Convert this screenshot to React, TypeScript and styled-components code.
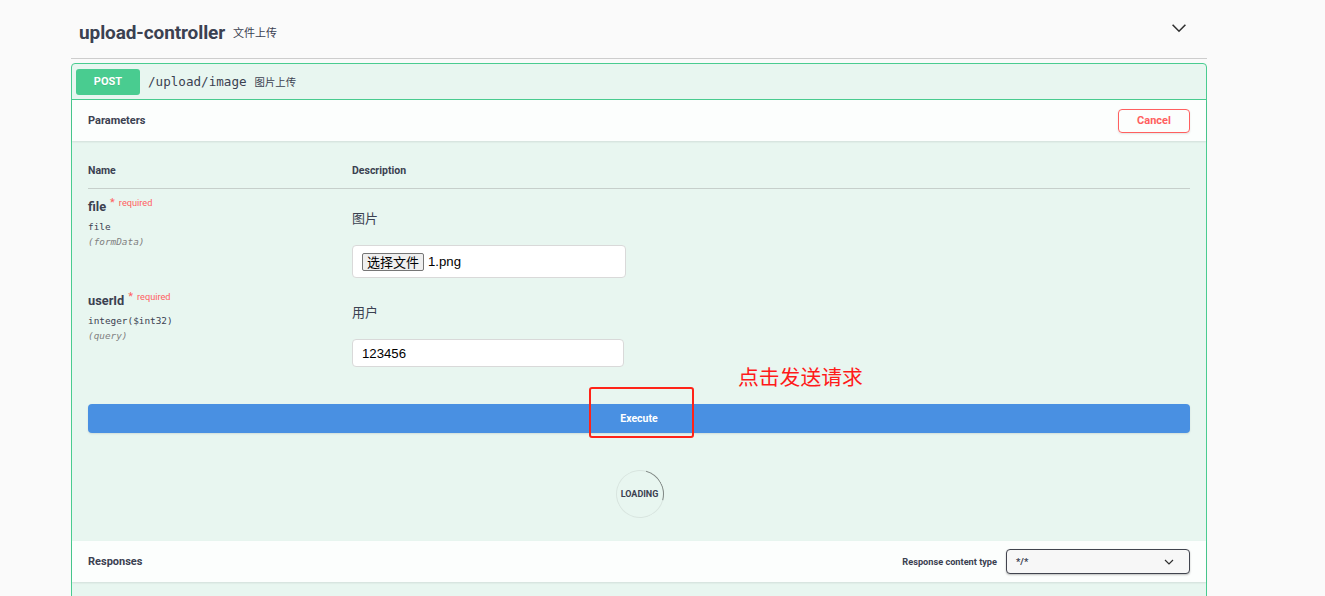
import React from "react";
import styled, { createGlobalStyle } from "styled-components";

const GlobalStyle = createGlobalStyle`
  html, body { margin: 0; padding: 0; background: #fafafa; }
  body { font-family: Roboto, "Noto Sans CJK SC", sans-serif; color: #3b4151; }
  * { box-sizing: border-box; }
`;

const UI = `Roboto, "Noto Sans CJK SC", sans-serif`;
const MONO = `"DejaVu Sans Mono", "Noto Sans CJK SC", monospace`;
const CJK = `"Noto Sans CJK SC", sans-serif`;

const Page = styled.div`
  position: relative;
  width: 1325px;
  height: 596px;
  overflow: hidden;
`;

const Wrapper = styled.div`
  margin-left: 71px;
  width: 1136px;
`;

const TagHeader = styled.div`
  height: 59px;
  display: flex;
  align-items: center;
  padding: 6px 20px 0 8px;
  border-bottom: 1px solid #cdcdcd;
`;

const TagTitle = styled.span`
  font-family: ${UI};
  font-weight: 700;
  font-size: 19px;
  color: #3b4151;
  letter-spacing: -0.1px;
`;

const TagSmall = styled.span`
  font-family: ${CJK};
  font-size: 11px;
  color: #3b4151;
  margin-left: 8px;
  flex: 1;
`;

const ChevronSlot = styled.span`
  display: flex;
  margin-bottom: 8px;
`;

const Opblock = styled.div`
  margin-top: 4px;
  border: 1px solid #49cc90;
  border-radius: 4px;
  background: #e8f6f0;
  height: 600px;
`;

const Summary = styled.div`
  height: 36px;
  display: flex;
  align-items: center;
  padding: 0 4px;
  border-bottom: 1px solid #49cc90;
`;

const Method = styled.span`
  width: 64px;
  height: 26px;
  border-radius: 3px;
  background: #49cc90;
  color: #fff;
  font-family: ${UI};
  font-weight: 700;
  font-size: 11px;
  display: flex;
  align-items: center;
  justify-content: center;
  text-shadow: 0 1px 0 rgba(0, 0, 0, 0.1);
`;

const Path = styled.span`
  font-family: ${MONO};
  font-size: 12.6px;
  color: #3b4151;
  margin-left: 8px;
`;

const PathDesc = styled.span`
  font-family: ${CJK};
  font-size: 10.4px;
  color: #3b4151;
  margin-left: 8px;
`;

const SectionHeader = styled.div`
  height: 41px;
  display: flex;
  align-items: center;
  justify-content: space-between;
  padding: 0 16px 0 16px;
  background: rgba(255, 255, 255, 0.85);
  box-shadow: 0 1px 2px rgba(0, 0, 0, 0.1);
`;

const SectionTitle = styled.h4`
  margin: 0;
  font-family: ${UI};
  font-weight: 700;
  font-size: 11px;
  color: #3b4151;
`;

const CancelButton = styled.button`
  width: 72px;
  height: 24px;
  border: 1.5px solid #ff6060;
  border-radius: 4px;
  background: transparent;
  color: #ff6060;
  font-family: ${UI};
  font-weight: 700;
  font-size: 11px;
  box-shadow: 0 1px 2px rgba(0, 0, 0, 0.1);
  padding: 0;
`;

const Body = styled.div`
  padding: 20px 16px 0 16px;
  height: 400px;
  display: flex;
  flex-direction: column;
`;

const TableHead = styled.div`
  display: grid;
  grid-template-columns: 264px 1fr;
  height: 28px;
  align-items: start;
  border-bottom: 1px solid #c6cfcb;
  font-family: ${UI};
  font-weight: 700;
  font-size: 10.5px;
  line-height: 12px;
  color: #3b4151;
  padding-top: 4px;
`;

const Row = styled.div`
  display: grid;
  grid-template-columns: 264px 1fr;
  padding: 10px 0 5px;
`;

const NameCell = styled.div`
  display: flex;
  flex-direction: column;
`;

const ParamName = styled.div`
  font-family: ${UI};
  font-weight: 700;
  font-size: 12.8px;
  line-height: 16px;
  color: #3b4151;
`;

const Required = styled.span`
  font-family: ${UI};
  font-weight: 400;
  font-size: 9.2px;
  color: #ff6060;
  position: relative;
  top: -5px;
  margin-left: 4px;
`;

const Star = styled.span`
  font-size: 11px;
  margin-right: 4px;
`;

const ParamType = styled.div`
  font-family: ${MONO};
  font-size: 9.4px;
  color: #3b4151;
  margin-top: 5px;
`;

const ParamIn = styled.div`
  font-family: ${MONO};
  font-size: 9.4px;
  font-style: italic;
  color: #808080;
  margin-top: 4px;
`;

const DescCell = styled.div`
  display: flex;
  flex-direction: column;
  padding-top: 11px;
`;

const DescText = styled.div`
  font-family: ${CJK};
  font-size: 13px;
  line-height: 16px;
  color: #3b4151;
`;

const InputBox = styled.div<{ $w: number; $h: number }>`
  margin-top: 19px;
  width: ${(p) => p.$w}px;
  height: ${(p) => p.$h}px;
  background: #fff;
  border: 1px solid #d9d9d9;
  border-radius: 4px;
  display: flex;
  align-items: center;
  padding: 0 9px;
  font-family: "Liberation Sans", ${CJK};
  font-size: 13.2px;
  color: #000;
`;

const FileButton = styled.span`
  font-family: ${CJK};
  font-size: 13px;
  line-height: 16px;
  padding: 0 4px;
  background: #efefef;
  border: 1px solid #767676;
  border-radius: 2px;
  color: #000;
  margin-right: 4px;
`;

const ExecuteButton = styled.button`
  margin-top: 32px;
  height: 29px;
  width: 100%;
  border: none;
  border-radius: 4px;
  background: #4990e2;
  color: #fff;
  font-family: ${UI};
  font-weight: 700;
  font-size: 10.5px;
  box-shadow: 0 1px 2px rgba(0, 0, 0, 0.1);
`;

const LoadingWrap = styled.div`
  margin-top: 37px;
  display: flex;
  justify-content: center;
  padding-left: 1px;
`;

const Loading = styled.div`
  position: relative;
  width: 48px;
  height: 48px;
  display: flex;
  align-items: center;
  justify-content: center;
  font-family: ${UI};
  font-weight: 700;
  font-size: 9px;
  color: #3b4151;
  &::before {
    content: "";
    position: absolute;
    inset: 0;
    border-radius: 50%;
    border: 1.5px solid rgba(85, 85, 85, 0.1);
    border-top-color: rgba(0, 0, 0, 0.45);
    transform: rotate(60deg);
  }
`;

const ContentType = styled.div`
  display: flex;
  align-items: center;
  gap: 9px;
`;

const ContentLabel = styled.span`
  font-family: ${UI};
  font-weight: 700;
  font-size: 9.2px;
  color: #3b4151;
`;

const Select = styled.div`
  width: 184px;
  height: 25px;
  border: 1px solid #41444e;
  border-radius: 4px;
  background: #f7f7f7;
  box-shadow: 0 1px 2px rgba(0, 0, 0, 0.25);
  display: flex;
  align-items: center;
  justify-content: space-between;
  padding: 0 15px 0 9px;
  font-family: ${UI};
  font-weight: 700;
  font-size: 9.6px;
  color: #3b4151;
`;

const Annotation = styled.div`
  position: absolute;
  left: 589px;
  top: 387px;
  width: 105px;
  height: 51px;
  border: 2.5px solid #ff2318;
  border-radius: 3px;
`;

const AnnotationText = styled.div`
  position: absolute;
  left: 738px;
  top: 363px;
  font-family: ${CJK};
  font-size: 20.8px;
  line-height: 26px;
  color: #ff1a1a;
`;

const Chevron = ({ size = 14, sw = 1.6 }: { size?: number; sw?: number }) => (
  <svg width={size} height={size} viewBox="0 0 20 20" fill="none">
    <path d="M2 6 L10 14 L18 6" stroke="#303030" strokeWidth={sw} />
  </svg>
);

export default function App() {
  return (
    <Page>
      <GlobalStyle />
      <Wrapper>
        <TagHeader>
          <TagTitle>upload-controller</TagTitle>
          <TagSmall>文件上传</TagSmall>
          <ChevronSlot>
            <Chevron size={16} sw={2} />
          </ChevronSlot>
        </TagHeader>
        <Opblock>
          <Summary>
            <Method>POST</Method>
            <Path>/upload/image</Path>
            <PathDesc>图片上传</PathDesc>
          </Summary>
          <SectionHeader>
            <SectionTitle>Parameters</SectionTitle>
            <CancelButton>Cancel</CancelButton>
          </SectionHeader>
          <Body>
            <TableHead>
              <span>Name</span>
              <span>Description</span>
            </TableHead>
            <Row>
              <NameCell>
                <ParamName>
                  file
                  <Required>
                    <Star>*</Star>required
                  </Required>
                </ParamName>
                <ParamType>file</ParamType>
                <ParamIn>(formData)</ParamIn>
              </NameCell>
              <DescCell>
                <DescText>图片</DescText>
                <InputBox $w={274} $h={33}>
                  <FileButton>选择文件</FileButton>1.png
                </InputBox>
              </DescCell>
            </Row>
            <Row>
              <NameCell>
                <ParamName>
                  userId
                  <Required>
                    <Star>*</Star>required
                  </Required>
                </ParamName>
                <ParamType>integer($int32)</ParamType>
                <ParamIn>(query)</ParamIn>
              </NameCell>
              <DescCell>
                <DescText>用户</DescText>
                <InputBox $w={272} $h={28}>123456</InputBox>
              </DescCell>
            </Row>
            <ExecuteButton>Execute</ExecuteButton>
            <LoadingWrap>
              <Loading>LOADING</Loading>
            </LoadingWrap>
          </Body>
          <SectionHeader>
            <SectionTitle>Responses</SectionTitle>
            <ContentType>
              <ContentLabel>Response content type</ContentLabel>
              <Select>
                <span>*/*</span>
                <Chevron size={10} sw={2.4} />
              </Select>
            </ContentType>
          </SectionHeader>
        </Opblock>
      </Wrapper>
      <Annotation />
      <AnnotationText>点击发送请求</AnnotationText>
    </Page>
  );
}
